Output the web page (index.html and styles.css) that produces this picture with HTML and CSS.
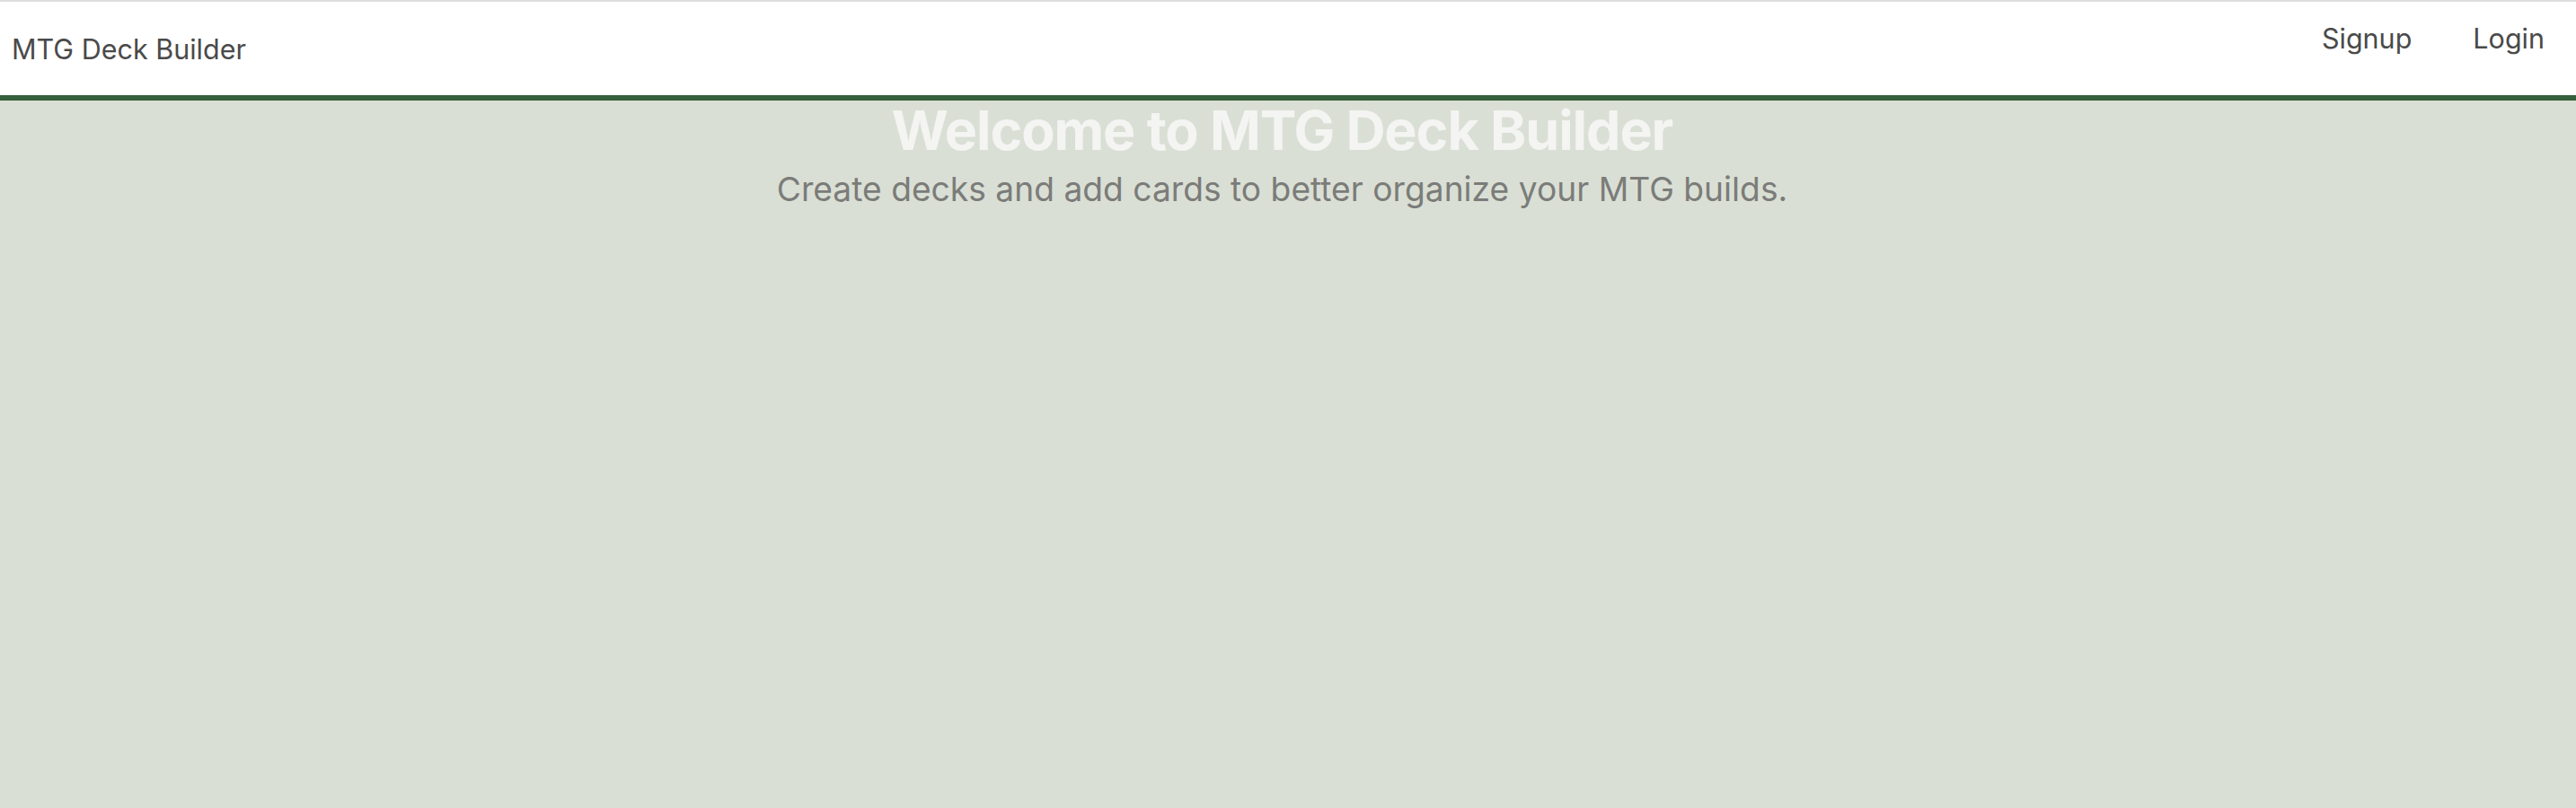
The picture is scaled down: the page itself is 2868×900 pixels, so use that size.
FILE: index.html
```html
<!DOCTYPE html>
<html>
<head>
<meta charset="utf-8">
<link rel="stylesheet" href="styles.css">
</head>
<body>
<nav class="navbar">
  <a class="brand" href="#">MTG Deck Builder</a>
  <ul class="nav-links">
    <li><a href="#">Signup</a></li>
    <li><a href="#">Login</a></li>
  </ul>
</nav>
<main class="hero">
  <h1 class="hero-title">Welcome to MTG Deck Builder</h1>
  <p class="hero-sub">Create decks and add cards to better organize your MTG builds.</p>
</main>
</body>
</html>
```
FILE: styles.css
```css
html, body {
  margin: 0;
  padding: 0;
  height: 100%;
}
body {
  background: #dadfd5;
  font-family: Inter, "Noto Sans", sans-serif;
}
.navbar {
  display: flex;
  justify-content: space-between;
  align-items: flex-start;
  background: #fff;
  border-top: 2px solid #dedede;
  border-bottom: 6px solid #36603b;
  height: 104px;
  box-sizing: content-box;
}
.brand {
  color: #4a4a4a;
  text-decoration: none;
  font-size: 30.5px;
  margin-left: 13px;
  margin-top: 35px;
  line-height: 36px;
}
.nav-links {
  display: flex;
  list-style: none;
  margin: 0;
  padding: 0;
  margin-top: 21px;
  margin-right: 35px;
  gap: 68px;
}
.nav-links a {
  color: #4a4a4a;
  text-decoration: none;
  font-size: 30.5px;
  line-height: 40px;
}
.hero {
  text-align: center;
  padding-right: 13px;
}
.hero-title {
  margin: 0;
  margin-top: -2px;
  color: #f4f4f2;
  font-weight: 700;
  font-size: 61px;
  letter-spacing: -1.1px;
  line-height: 70px;
}
.hero-sub {
  margin: 0;
  margin-top: 7px;
  color: #7b7c79;
  font-size: 37.2px;
  line-height: 48px;
}
```
